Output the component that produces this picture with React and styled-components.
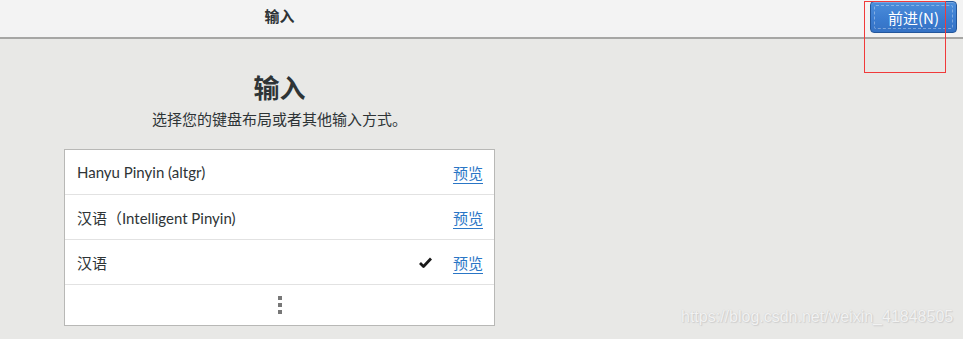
import React from "react";
import styled, { createGlobalStyle } from "styled-components";

const Global = createGlobalStyle`
  html, body { margin: 0; padding: 0; }
  body {
    width: 963px; height: 339px; overflow: hidden;
    background: #e8e8e6;
    font-family: "Noto Sans", "Noto Sans CJK SC", sans-serif;
    color: #2e3436;
  }
`;

const Page = styled.div`
  position: relative;
  width: 963px;
  height: 339px;
  background: #e8e8e6;
`;

const Header = styled.header`
  height: 39px;
  box-sizing: border-box;
  background: #f3f3f3;
  border-bottom: 2px solid #a6a6a4;
  display: grid;
  grid-template-columns: 559px 1fr auto;
  align-items: start;
`;

const HeaderTitle = styled.div`
  font-weight: bold;
  font-size: 15px;
  text-align: center;
  padding-top: 6px;
  line-height: 20px;
  color: #2e3436;
`;

const NextButton = styled.button`
  grid-column: 3;
  margin: 1px 6px 0 0;
  width: 87px;
  height: 32px;
  border-radius: 4px;
  border: 1px solid #23569b;
  background: linear-gradient(#4c8edb, #3a7bcf 60%, #3572c4);
  color: #fff;
  font-family: "Noto Sans CJK SC", "Noto Sans", sans-serif;
  font-size: 15px;
  position: relative;
  padding: 0;
  box-shadow: inset 0 1px 0 rgba(255,255,255,0.25);
  &::after {
    content: "";
    position: absolute;
    inset: 3px;
    border: 1px dashed rgba(255,255,255,0.35);
    border-radius: 2px;
  }
`;

const Content = styled.main`
  width: 431px;
  margin-left: 64px;
  display: flex;
  flex-direction: column;
  align-items: center;
`;

const Title = styled.h1`
  margin: 32px 0 0;
  font-size: 26px;
  line-height: 34px;
  font-weight: bold;
  color: #2e3436;
`;

const Subtitle = styled.p`
  margin: 4px 0 0;
  font-size: 15px;
  line-height: 20px;
  color: #2e3436;
`;

const List = styled.div`
  margin-top: 20px;
  width: 431px;
  box-sizing: border-box;
  background: #fff;
  border: 1px solid #b8b8b6;
`;

const Row = styled.div`
  height: 45px;
  box-sizing: border-box;
  border-bottom: 1px solid #e2e2e2;
  display: flex;
  align-items: center;
  padding: 0 11px 0 12px;
  font-family: "Lato", "Noto Sans CJK SC", sans-serif;
  font-size: 15px;
  color: #2e3436;
`;

const RowLabel = styled.span`
  flex: 1;
`;

const Check = styled.span`
  width: 14px;
  display: flex;
  justify-content: center;
  margin-right: 20px;
`;

const Preview = styled.a`
  color: #2a76c6;
  text-decoration: underline;
  text-underline-offset: 4px;
  font-family: "Noto Sans CJK SC", sans-serif;
  font-size: 15px;
  cursor: pointer;
`;

const MoreRow = styled.div`
  height: 40px;
  display: flex;
  align-items: center;
  justify-content: center;
`;

const Dots = styled.div`
  display: flex;
  flex-direction: column;
  gap: 3px;
  & > span { width: 4px; height: 4px; background: #777; display: block; }
`;

const Highlight = styled.div`
  position: absolute;
  left: 864px;
  top: 1px;
  width: 82px;
  height: 72px;
  border: 1px solid #f03a3a;
  box-sizing: border-box;
  pointer-events: none;
`;

const Watermark = styled.div`
  position: absolute;
  left: 681px;
  top: 308px;
  font-family: "Liberation Sans", Arial, sans-serif;
  font-size: 16px;
  color: #f2f2f2;
  text-shadow: 0 0 1px #c4c4c4, 1px 1px 1px #d0d0d0;
`;

const items = [
  { label: "Hanyu Pinyin (altgr)" },
  { label: "汉语（Intelligent Pinyin)" },
  { label: "汉语", checked: true },
];

export default function App() {
  return (
    <Page>
      <Global />
      <Header>
        <HeaderTitle>输入</HeaderTitle>
        <NextButton>前进(N)</NextButton>
      </Header>
      <Content>
        <Title>输入</Title>
        <Subtitle>选择您的键盘布局或者其他输入方式。</Subtitle>
        <List>
          {items.map((it) => (
            <Row key={it.label}>
              <RowLabel>{it.label}</RowLabel>
              <Check>
                {it.checked && (
                  <svg width="13" height="11" viewBox="0 0 13 11">
                    <path d="M1 6 L4.5 9.5 L12 1.5" stroke="#1a1a1a" strokeWidth="2.8" fill="none" strokeLinejoin="round" />
                  </svg>
                )}
              </Check>
              <Preview>预览</Preview>
            </Row>
          ))}
          <MoreRow>
            <Dots><span /><span /><span /></Dots>
          </MoreRow>
        </List>
      </Content>
      <Highlight />
      <Watermark>https://blog.csdn.net/weixin_41848505</Watermark>
    </Page>
  );
}
